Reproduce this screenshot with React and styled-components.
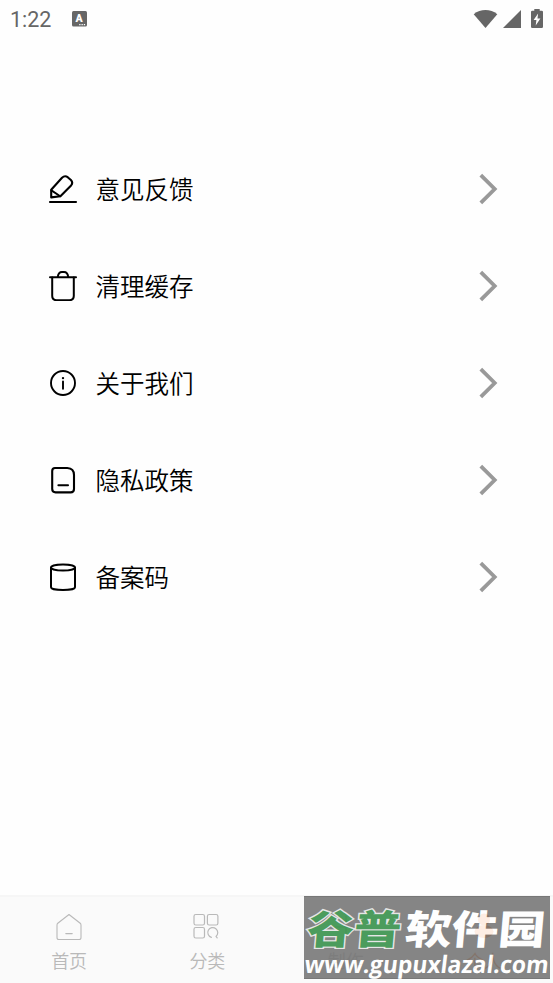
import styled, { createGlobalStyle } from 'styled-components'

const GlobalStyle = createGlobalStyle`
  * {
    box-sizing: border-box;
  }
  body {
    margin: 0;
    background: #fefefe;
    font-family: 'Noto Sans CJK SC', sans-serif;
  }
`

const Screen = styled.div`
  display: flex;
  flex-direction: column;
  height: 983px;
  overflow: hidden;
`

const StatusBar = styled.header`
  display: flex;
  align-items: center;
  justify-content: space-between;
  height: 38px;
  padding: 0 10px 0 10px;
  color: #666;
`

const StatusGroup = styled.div`
  display: flex;
  align-items: center;
  gap: ${({ $gap }) => $gap}px;
`

const Clock = styled.span`
  padding-top: 1px;
  font: 400 21.5px/38px Roboto, sans-serif;
`

const Menu = styled.main`
  display: flex;
  flex: 1;
  flex-direction: column;
  padding: 103px 54px 0 48px;
`

const MenuRow = styled.div`
  display: flex;
  flex-shrink: 0;
  align-items: center;
  height: 96.8px;
  color: #000;

  svg {
    flex-shrink: 0;
  }
`

const Label = styled.span`
  flex: 1;
  margin-left: 17.5px;
  font-size: 24.5px;
  font-weight: 350;
  line-height: 36px;
`

const TabBar = styled.nav`
  position: relative;
  display: grid;
  grid-template-columns: repeat(4, 1fr);
  height: 88px;
  border-top: 2px solid #f6f6f6;
  background: #fafafa;
`

const Tab = styled.div`
  display: flex;
  flex-direction: column;
  align-items: center;
  padding-top: 15px;
  color: ${({ $active }) => ($active ? '#f2701d' : '#b9b9b9')};
  font-size: 18px;
  font-weight: 350;
  line-height: 26px;

  svg {
    margin-bottom: 5px;
  }
`

const Watermark = styled.div`
  position: absolute;
  top: -1px;
  left: 304px;
  width: 246px;
  height: 83px;
  background: #757575;
  border-top: 1px solid #666;
  border-bottom: 1px solid #666;
  opacity: 0.88;

  svg {
    display: block;
    overflow: visible;
  }
`

const Line = ({ children, size = 30, width = 2.4 }) => (
  <svg
    width={size}
    height={size}
    viewBox="0 0 30 30"
    fill="none"
    stroke="currentColor"
    strokeWidth={width}
    strokeLinecap="round"
    strokeLinejoin="round"
  >
    {children}
  </svg>
)

const PenIcon = () => (
  <Line>
    <path d="M3.2 15.8 14 3.8Q16.8 1 19.7 3.2L22.9 6Q25.4 8.6 23.1 11.4L12.4 22.2 3.2 23.4Z" strokeWidth="2.1" />
    <path d="M3.4 16.4 12.2 22.2" strokeWidth="1.9" />
    <path d="M2 28H28" strokeWidth="2.1" />
  </Line>
)

const TrashIcon = () => (
  <Line>
    <path d="M2 6.2H28" strokeWidth="2" />
    <path d="M9.8 5.8C10.2 2.6 11.5 1.1 14 1.1H16C18.5 1.1 19.8 2.6 20.2 5.8" strokeWidth="2" />
    <path d="M4.2 6.5V24.8Q4.2 29.2 8.6 29.2H21.4Q25.8 29.2 25.8 24.8V6.5" strokeWidth="2" />
  </Line>
)

const InfoIcon = () => (
  <Line width={1.9}>
    <circle cx="15" cy="15" r="12" />
    <path d="M15 13.4V20.8" />
    <circle cx="15" cy="10.1" r="1.2" fill="currentColor" stroke="none" />
  </Line>
)

const DocIcon = () => (
  <Line width={2.1}>
    <path d="M7 3H19.3Q26 3.3 26 10V24Q26 27.4 22.6 27.4H7.6Q4.2 27.4 4.2 24V6Q4.2 3 7 3Z" />
    <path d="M10.4 20.2H20" />
  </Line>
)

const DrumIcon = () => (
  <Line width={2}>
    <ellipse cx="15" cy="5.5" rx="12" ry="3" />
    <path d="M3 5.5V25.2C3 29 27 29 27 25.2V5.5" />
  </Line>
)

const Chevron = () => (
  <svg width="20" height="32" viewBox="0 0 20 32" fill="none" stroke="#999" strokeWidth="3.8">
    <path d="M1.8 2.2 15.7 16 1.8 29.8" />
  </svg>
)

const HomeIcon = () => (
  <Line width={1.1}>
    <path d="M15 2.5 26.2 11.2Q27 12 27 13.2V25.4Q27 27.5 25 27.5H5Q3 27.5 3 25.4V13.2Q3 12 3.8 11.2Z" />
    <path d="M11.8 21.6H18.2" />
  </Line>
)

const CategoryIcon = () => (
  <Line width={1.2}>
    <rect x="2" y="2.5" width="10.5" height="10.5" rx="1.8" />
    <rect x="15.4" y="2.5" width="10.5" height="10.5" rx="1.8" />
    <rect x="2" y="15.5" width="10.5" height="10.5" rx="1.8" />
    <path d="M19.4 25.4A5 5 0 1 1 24 24.4M24 24.4 25.2 25.8" />
  </Line>
)

const PersonIcon = () => (
  <Line>
    <ellipse cx="15" cy="19.5" rx="9.5" ry="6.5" fill="#f2701d" stroke="none" />
    <circle cx="15" cy="7.5" r="6" fill="#f2701d" stroke="none" />
  </Line>
)

const WifiIcon = () => (
  <svg width="25" height="19" viewBox="0 0 25 19" fill="currentColor">
    <path d="M0.7 4.3C7.5-1.3 17.5-1.3 24.3 4.3L12.5 18Z" />
  </svg>
)

const SignalIcon = () => (
  <svg width="18" height="19" viewBox="0 0 18 19" fill="currentColor">
    <path d="M0 18 18 0V18Z" />
  </svg>
)

const BatteryIcon = () => (
  <svg width="12" height="20" viewBox="0 0 12 20" fill="currentColor">
    <path d="M3.3 1.7V0H8.7V1.7H10.8Q12 1.7 12 2.9V17.8Q12 19 10.8 19H1.2Q0 19 0 17.8V2.9Q0 1.7 1.2 1.7Z" />
    <path d="M7.1 4.6 2.6 11.1H5.4L4.7 16.6 9.4 9.4H6.5Z" fill="#fff" />
  </svg>
)

const KeyboardBadge = () => (
  <svg width="15" height="16" viewBox="0 0 15 16">
    <rect width="15" height="15.5" rx="1.5" fill="#666" />
    <text x="7" y="11" textAnchor="middle" fontFamily="Roboto, sans-serif" fontWeight="900" fontSize="10.5" fill="#fff">
      A
    </text>
    <path d="M7.2 13.6H13.5" stroke="#fff" strokeWidth="1.3" strokeDasharray="1.3 1" />
  </svg>
)

const SiteMark = () => (
  <svg width="246" height="81" viewBox="0 0 246 81" fontFamily="'Noto Sans CJK SC', sans-serif" fontWeight="900">
    <g transform="skewX(-5)">
      <text
        x="6"
        y="47"
        fontSize="40"
        textLength="94"
        lengthAdjust="spacingAndGlyphs"
        fill="#349048"
        stroke="#e4e4e4"
        strokeWidth="2.6"
        paintOrder="stroke"
      >
        谷普
      </text>
      <text x="104" y="47" fontSize="40" textLength="140" lengthAdjust="spacingAndGlyphs" fill="#fff">
        软件园
      </text>
    </g>
    <text
      transform="translate(9 0) skewX(-7)"
      x="0"
      y="76"
      fontFamily="'Open Sans', sans-serif"
      fontWeight="700"
      fontSize="24"
      textLength="244"
      lengthAdjust="spacingAndGlyphs"
      fill="#fff"
    >
      www.gupuxlazal.com
    </text>
  </svg>
)

const items = [
  { label: '意见反馈', Icon: PenIcon },
  { label: '清理缓存', Icon: TrashIcon },
  { label: '关于我们', Icon: InfoIcon },
  { label: '隐私政策', Icon: DocIcon },
  { label: '备案码', Icon: DrumIcon },
]

const App = () => (
  <Screen>
    <GlobalStyle />
    <StatusBar>
      <StatusGroup $gap={21}>
        <Clock>1:22</Clock>
        <KeyboardBadge />
      </StatusGroup>
      <StatusGroup $gap={5}>
        <WifiIcon />
        <SignalIcon />
        <span />
        <BatteryIcon />
      </StatusGroup>
    </StatusBar>
    <Menu>
      {items.map(({ label, Icon }) => (
        <MenuRow key={label}>
          <Icon />
          <Label>{label}</Label>
          <Chevron />
        </MenuRow>
      ))}
    </Menu>
    <TabBar>
      <Tab>
        <HomeIcon />
        首页
      </Tab>
      <Tab>
        <CategoryIcon />
        分类
      </Tab>
      <Tab>
        <Line width={1.1}>
          <path d="M15 4V26M4 15H26" />
        </Line>
        制作
      </Tab>
      <Tab $active>
        <PersonIcon />
        个人
      </Tab>
      <Watermark>
        <SiteMark />
      </Watermark>
    </TabBar>
  </Screen>
)

export default App
